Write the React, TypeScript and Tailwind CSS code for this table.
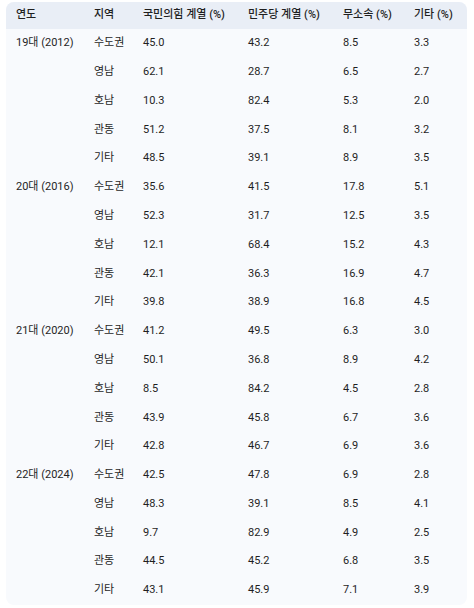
const data = [
  {
    year: "19대 (2012)",
    rows: [
      ["수도권", "45.0", "43.2", "8.5", "3.3"],
      ["영남", "62.1", "28.7", "6.5", "2.7"],
      ["호남", "10.3", "82.4", "5.3", "2.0"],
      ["관동", "51.2", "37.5", "8.1", "3.2"],
      ["기타", "48.5", "39.1", "8.9", "3.5"],
    ],
  },
  {
    year: "20대 (2016)",
    rows: [
      ["수도권", "35.6", "41.5", "17.8", "5.1"],
      ["영남", "52.3", "31.7", "12.5", "3.5"],
      ["호남", "12.1", "68.4", "15.2", "4.3"],
      ["관동", "42.1", "36.3", "16.9", "4.7"],
      ["기타", "39.8", "38.9", "16.8", "4.5"],
    ],
  },
  {
    year: "21대 (2020)",
    rows: [
      ["수도권", "41.2", "49.5", "6.3", "3.0"],
      ["영남", "50.1", "36.8", "8.9", "4.2"],
      ["호남", "8.5", "84.2", "4.5", "2.8"],
      ["관동", "43.9", "45.8", "6.7", "3.6"],
      ["기타", "42.8", "46.7", "6.9", "3.6"],
    ],
  },
  {
    year: "22대 (2024)",
    rows: [
      ["수도권", "42.5", "47.8", "6.9", "2.8"],
      ["영남", "48.3", "39.1", "8.5", "4.1"],
      ["호남", "9.7", "82.9", "4.9", "2.5"],
      ["관동", "44.5", "45.2", "6.8", "3.5"],
      ["기타", "43.1", "45.9", "7.1", "3.9"],
    ],
  },
];

const headers = ["연도", "지역", "국민의힘 계열 (%)", "민주당 계열 (%)", "무소속 (%)", "기타 (%)"];
const cols = "grid grid-cols-[78px_49px_105px_95px_71px_53px] pl-[10px] items-center";

export default function App() {
  return (
    <div className="pt-[2px] px-[6px] font-['Roboto','Noto_Sans_CJK_KR',sans-serif] text-[11px] text-[#1f1f1f]">
      <div className="w-[461px] rounded-lg overflow-hidden bg-[#f8fafd]">
        <div className={`${cols} h-[27px] bg-[#e9eef6] font-medium`}>
          {headers.map((h) => (
            <div key={h}>{h}</div>
          ))}
        </div>
        {data.map((g) =>
          g.rows.map((r, j) => (
            <div key={g.year + r[0]} className={`${cols} h-[28.8px]`}>
              <div>{j === 0 ? g.year : ""}</div>
              {r.map((c, k) => (
                <div key={k}>{c}</div>
              ))}
            </div>
          ))
        )}
      </div>
    </div>
  );
}
